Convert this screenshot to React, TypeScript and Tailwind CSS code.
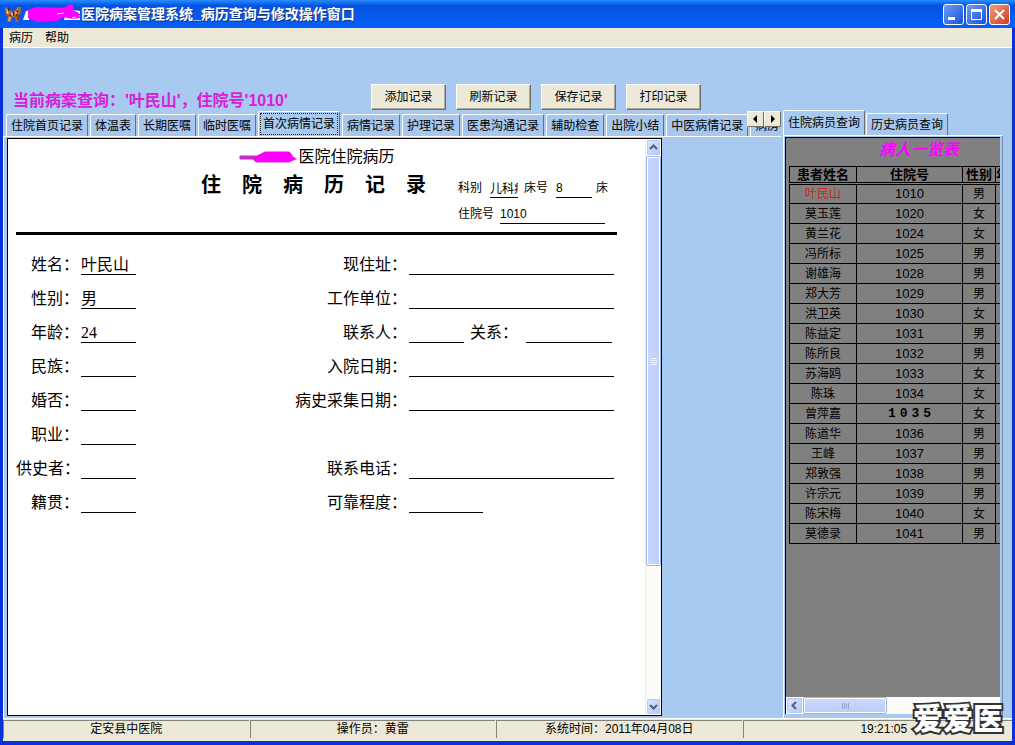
import React, { useState } from 'react';

interface Patient {
  name: string;
  id: string;
  gender: string;
}

const recordTabs = [
  '住院首页记录',
  '体温表',
  '长期医嘱',
  '临时医嘱',
  '首次病情记录',
  '病情记录',
  '护理记录',
  '医患沟通记录',
  '辅助检查',
  '出院小结',
  '中医病情记录',
  '病房',
];

const patientTabs = ['住院病员查询', '历史病员查询'];

const actions = ['添加记录', '刷新记录', '保存记录', '打印记录'];

const patients: Patient[] = [
  { name: '叶民山', id: '1010', gender: '男' },
  { name: '莫玉莲', id: '1020', gender: '女' },
  { name: '黄兰花', id: '1024', gender: '女' },
  { name: '冯所标', id: '1025', gender: '男' },
  { name: '谢雄海', id: '1028', gender: '男' },
  { name: '郑大芳', id: '1029', gender: '男' },
  { name: '洪卫英', id: '1030', gender: '女' },
  { name: '陈益定', id: '1031', gender: '男' },
  { name: '陈所良', id: '1032', gender: '男' },
  { name: '苏海鸥', id: '1033', gender: '女' },
  { name: '陈珠', id: '1034', gender: '女' },
  { name: '曾萍嘉', id: '1035', gender: '女' },
  { name: '陈道华', id: '1036', gender: '男' },
  { name: '王峰', id: '1037', gender: '男' },
  { name: '郑敦强', id: '1038', gender: '男' },
  { name: '许宗元', id: '1039', gender: '男' },
  { name: '陈宋梅', id: '1040', gender: '女' },
  { name: '莫德录', id: '1041', gender: '男' },
];

const TigerIcon = () => (
  <svg width="16" height="16" viewBox="0 0 16 16" aria-hidden="true">
    <path d="M0 1l3 1 1 2 4 1 3-1 1-3 4 0v5l-2 3v5l-1 2h-3l1-4-4-1-1 5H2l1-5-3-4z" fill="#a8653c" />
    <path d="M1 3l2 1 1 3-2 1zM6 6l2 1v3L6 9zM10 5l2 1-1 4-1-2zM4 11h2l-1 4H3z" fill="#e9a878" />
    <path d="M3 2l1 3M8 5l1 5M13 3l-1 3M13 9v5M4 9l2 1M11 8l1 2" stroke="#3b1c14" fill="none" />
    <path d="M12 3h1v1h-1zM2 6h1v1H2z" fill="#fff" />
  </svg>
);

const Chevron = ({ d }: { d: string }) => (
  <svg width="9" height="9" viewBox="0 0 9 9" aria-hidden="true">
    <path d={d} fill="none" stroke="#4d6185" strokeWidth="2" />
  </svg>
);

const scrollButton =
  'flex shrink-0 items-center justify-center rounded-xs border border-white bg-gradient-to-br from-[#dbe6fe] to-[#b4c8f6] shadow-[inset_0_0_0_1px_#b8cbf6]';
const windowButton =
  'flex size-[21px] items-center justify-center rounded-[3px] border border-white';

interface TabProps {
  label: string;
  active: boolean;
  onClick: () => void;
  focusRing?: boolean;
}

const Tab: React.FC<TabProps> = ({ label, active, onClick, focusRing }) => (
  <button
    role="tab"
    aria-selected={active}
    onClick={onClick}
    className={`shrink-0 whitespace-nowrap rounded-t-xs border-t border-r border-l border-t-white border-l-white border-r-[#6b7078] text-xs ${
      active ? 'h-[25px] bg-[#a8caf0] p-px' : 'h-[22px] bg-[#a9c6ec] px-1'
    }`}
  >
    {active ? (
      <span
        className={`flex h-full items-center border border-dotted px-[2px] ${
          focusRing ? 'border-[#222]' : 'border-transparent'
        }`}
      >
        {label}
      </span>
    ) : (
      label
    )}
  </button>
);

interface FieldProps {
  id: string;
  label: string;
  value?: string;
  width: string;
}

// One label / underlined input pair of the record sheet
const Field: React.FC<FieldProps> = ({ id, label, value = '', width }) => (
  <>
    <label htmlFor={id} className="text-right whitespace-nowrap">
      {label}
    </label>
    <input
      id={id}
      defaultValue={value}
      className={`h-5 border-b border-black bg-transparent outline-none ${width}`}
    />
  </>
);

const RecordSheet = () => (
  <form className="ml-2 w-full max-w-[601px] text-black">
    <div className="mt-[6px] flex h-6 items-center justify-center font-['Liberation_Serif','Noto_Sans_CJK_SC',serif] text-base">
      <svg width="60" height="14" viewBox="0 0 60 14" aria-hidden="true">
        <path d="M2 6h17l8-4h24l3 3v5l-3 2H18l-3-3H2z" fill="#c02fc4" stroke="#c02fc4" strokeLinejoin="round" />
        <path d="M15 8l13-6h24l2 4 5 3-5 2-3 1H18z" fill="#ff00ff" />
      </svg>
      <span>医院住院病历</span>
    </div>

    <div className="grid grid-cols-[1fr_auto_1fr]">
      <span />
      <h1 className="flex h-8 items-center gap-[21px] pr-[6px] text-xl font-bold">
        {Array.from('住院病历记录').map((char, index) => (
          <span key={index}>{char}</span>
        ))}
      </h1>
      <div className="mt-[9px] flex flex-col gap-[6px] pl-[26px] text-xs">
        <div className="flex h-5 items-center">
          <label htmlFor="department" className="shrink-0">科别</label>
          <input id="department" defaultValue="儿科病" className="ml-2 h-5 w-7 border-b border-black outline-none" />
          <label htmlFor="bed" className="ml-[6px] shrink-0">床号</label>
          <input id="bed" defaultValue="8" className="ml-2 h-5 w-9 border-b border-black outline-none" />
          <span className="ml-1">床</span>
        </div>
        <div className="flex h-5 items-center">
          <label htmlFor="admission" className="shrink-0">住院号</label>
          <input id="admission" defaultValue="1010" className="ml-[6px] h-5 w-[105px] border-b border-black outline-none" />
        </div>
      </div>
    </div>

    <hr className="mt-2 border-t-[3px] border-black" />

    <div className="mt-[13px] grid auto-rows-[34px] grid-cols-[63px_55px_1fr_205px] items-center gap-x-[2px] pr-[3px] font-['Liberation_Serif','Noto_Sans_CJK_SC',serif] text-base">
      <Field id="name" label="姓名：" value="叶民山" width="w-full" />
      <Field id="address" label="现住址：" width="w-full" />
      <Field id="gender" label="性别：" value="男" width="w-full" />
      <Field id="company" label="工作单位：" width="w-full" />
      <Field id="age" label="年龄：" value="24" width="w-full" />
      <label htmlFor="contact" className="text-right">联系人：</label>
      <div className="flex items-center">
        <input id="contact" className="h-5 w-[55px] border-b border-black outline-none" />
        <label htmlFor="relation" className="ml-[6px] shrink-0">关系：</label>
        <input id="relation" className="ml-2 h-5 w-[86px] border-b border-black outline-none" />
      </div>
      <Field id="nation" label="民族：" width="w-full" />
      <Field id="admitted" label="入院日期：" width="w-full" />
      <Field id="marriage" label="婚否：" width="w-full" />
      <Field id="collected" label="病史采集日期：" width="w-full" />
      <Field id="job" label="职业：" width="w-full" />
      <span className="col-span-2" />
      <Field id="narrator" label="供史者：" width="w-full" />
      <Field id="phone" label="联系电话：" width="w-full" />
      <Field id="origin" label="籍贯：" width="w-full" />
      <Field id="reliability" label="可靠程度：" width="w-[74px]" />
    </div>
  </form>
);

const PatientTable = () => (
  <table className="w-[260px] table-fixed border-collapse text-center text-xs text-black">
    <caption className="h-7 text-base leading-6 font-bold text-[#ff00ff] italic">病人一览表</caption>
    <colgroup>
      <col className="w-[67px]" />
      <col className="w-[106px]" />
      <col className="w-[33px]" />
      <col />
    </colgroup>
    <thead>
      <tr className="border border-b-[3px] border-black [border-bottom-style:double]">
        <th className="border-x border-black p-0 text-[13px] leading-[15px]">患者姓名</th>
        <th className="border-x border-black p-0 text-[13px] leading-[15px]">住院号</th>
        <th className="border-x border-black p-0 text-[13px] leading-[15px]">性别</th>
        <th className="border-x border-black p-0 text-left text-[13px] leading-[15px]">年龄</th>
      </tr>
    </thead>
    <tbody>
      {patients.map((patient, index) => (
        <tr key={patient.id} className="h-5">
          <td className={`border border-black p-0 leading-4 ${index === 0 ? 'text-[#e01818]' : ''}`}>
            {patient.name}
          </td>
          <td className="border border-black p-0 text-[13px] leading-4">
            {patient.id === '1035' ? (
              <span className="flex justify-center gap-1 font-['Liberation_Mono',monospace] font-bold">
                {Array.from(patient.id).map((digit, i) => (
                  <span key={i}>{digit}</span>
                ))}
              </span>
            ) : (
              patient.id
            )}
          </td>
          <td className="border border-black p-0 leading-4">{patient.gender}</td>
          <td className="border border-black p-0" />
        </tr>
      ))}
    </tbody>
  </table>
);

const App: React.FC = () => {
  const [recordTab, setRecordTab] = useState<string>('首次病情记录');
  const [patientTab, setPatientTab] = useState<string>('住院病员查询');

  return (
    <div className="relative flex min-h-screen flex-col bg-[#0831d9] px-[3px] pb-1 font-['Liberation_Sans','Noto_Sans_CJK_SC',sans-serif] text-xs text-black">
      {/* Title bar */}
      <header className="-mx-[3px] flex h-7 items-center bg-gradient-to-b from-[#2a8cff] via-[#0553e0] via-20% to-[#0560fa] pr-[5px] pl-[5px]">
        <TigerIcon />
        <svg className="ml-[2px]" width="58" height="20" viewBox="0 0 58 20" aria-hidden="true">
          <path d="M0 16l3-9 5-1-2 10zM42 12l15-1v5H41zM50 6l7 1v3h-7z" fill="#fff" />
          <path d="M5 6l8-3 27 1 8-4 3 2-1 4 6 3 1 5-7 1-10-2-6 4-20 1-9-4z" fill="#ff00ff" />
          <path d="M34 10l7-1M49 14l4-1" stroke="#fff" />
        </svg>
        <span className="flex-1 truncate text-sm font-bold text-white [text-shadow:1px_1px_0_#10307c]">
          医院病案管理系统_病历查询与修改操作窗口
        </span>
        <div className="flex gap-[2px]">
          <button aria-label="最小化" className={`${windowButton} bg-gradient-to-br from-[#6f9cf5] to-[#1c4fd6]`}>
            <svg width="13" height="13" viewBox="0 0 13 13">
              <path d="M1 9h7v3H1z" fill="#fff" />
            </svg>
          </button>
          <button aria-label="最大化" className={`${windowButton} bg-gradient-to-br from-[#6f9cf5] to-[#1c4fd6]`}>
            <svg width="13" height="13" viewBox="0 0 13 13">
              <path d="M1.5 2.5h10v9h-10z" fill="none" stroke="#fff" />
              <path d="M1 1h11v3H1z" fill="#fff" />
            </svg>
          </button>
          <button aria-label="关闭" className={`${windowButton} bg-gradient-to-br from-[#ef9a80] to-[#cc3a18]`}>
            <svg width="13" height="13" viewBox="0 0 13 13">
              <path d="M2 2l9 9M11 2l-9 9" stroke="#fff" strokeWidth="2" />
            </svg>
          </button>
        </div>
      </header>

      {/* Menu bar */}
      <nav className="flex h-5 items-center gap-3 border-b border-white bg-[#ece9d8] pl-[6px]">
        <button>病历</button>
        <button>帮助</button>
      </nav>

      <main className="flex flex-1 bg-[#a8caf0]">
        {/* Records */}
        <section className="flex min-w-0 flex-1 flex-col">
          <div className="flex h-[63px] items-end">
            <h2 className="w-[368px] shrink-0 pl-[10px] text-base leading-5 font-bold text-[#d820d8]">
              当前病案查询：'叶民山'，住院号'1010'
            </h2>
            <div className="mb-px flex gap-[10px]">
              {actions.map((action) => (
                <button
                  key={action}
                  className="h-[26px] w-[75px] border border-t-white border-r-[#716f64] border-b-[#716f64] border-l-white bg-[#ece9d8] shadow-[inset_-1px_-1px_0_#aca899]"
                >
                  {action}
                </button>
              ))}
            </div>
          </div>

          <div className="relative">
            <div role="tablist" className="flex h-[25px] items-end gap-[2px] overflow-hidden pl-[3px]">
              {recordTabs.map((tab) => (
                <Tab
                  key={tab}
                  label={tab}
                  active={recordTab === tab}
                  onClick={() => setRecordTab(tab)}
                  focusRing
                />
              ))}
            </div>
            <div className="absolute top-0 right-0 flex">
              <button
                aria-label="向左滚动"
                className="flex h-4 w-[17px] items-center justify-center border border-t-white border-r-[#716f64] border-b-[#716f64] border-l-white bg-[#ece9d8]"
              >
                <svg width="5" height="8" viewBox="0 0 5 8"><path d="M4 0v8L0 4z" /></svg>
              </button>
              <button
                aria-label="向右滚动"
                className="flex h-4 w-[17px] items-center justify-center border border-t-white border-r-[#716f64] border-b-[#716f64] border-l-white bg-[#ece9d8]"
              >
                <svg width="5" height="8" viewBox="0 0 5 8"><path d="M1 0v8l4-4z" /></svg>
              </button>
            </div>
          </div>

          <div className="flex flex-1 border-t border-l border-white pt-px pb-[2px] pl-[3px]">
            <div className="mr-[119px] flex flex-1 border border-black bg-white">
              <div className="min-w-0 flex-1">
                <RecordSheet />
              </div>
              <div className="flex w-4 flex-col border-l border-[#eeede5] bg-[#fbfbf8]">
                <button aria-label="向上" className={`h-[17px] ${scrollButton}`}>
                  <Chevron d="M1 6l3.5-3.5L8 6" />
                </button>
                <div className="flex flex-[408] flex-col items-center justify-center gap-px rounded-xs border border-[#9db4ea] bg-gradient-to-r from-[#cad8fc] to-[#bccdf8] shadow-[inset_0_0_0_1px_#fff]">
                  {[0, 1, 2, 3].map((line) => (
                    <span key={line} className="h-px w-[6px] bg-[#eef4fe]" />
                  ))}
                </div>
                <div className="flex-[132]" />
                <button aria-label="向下" className={`h-[17px] ${scrollButton}`}>
                  <Chevron d="M1 3l3.5 3.5L8 3" />
                </button>
              </div>
            </div>
          </div>
        </section>

        {/* Patient list */}
        <aside className="flex w-[231px] shrink-0 flex-col pt-[63px] pr-[9px] pl-[2px]">
          <div role="tablist" className="flex h-6 items-end gap-px">
            {patientTabs.map((tab) => (
              <Tab key={tab} label={tab} active={patientTab === tab} onClick={() => setPatientTab(tab)} />
            ))}
          </div>
          <div className="flex flex-1 flex-col border-t border-r border-l border-t-white border-r-[#6f8fa8] border-l-white pt-px pr-[2px] pb-1 pl-px">
            <div className="flex-1 overflow-hidden border-t border-l border-black bg-[#808080] pl-[3px]">
              <PatientTable />
            </div>
            <div className="flex h-[17px] border-l border-black bg-[#fbfbf8]">
              <button aria-label="向左" className={`w-[17px] ${scrollButton}`}>
                <Chevron d="M6 1L2.500 4.500L6 8" />
              </button>
              <div className="flex w-[84px] items-center justify-center gap-px rounded-xs border border-[#9db4ea] bg-gradient-to-b from-[#cad8fc] to-[#bccdf8] shadow-[inset_0_0_0_1px_#fff]">
                {[0, 1, 2, 3].map((line) => (
                  <span key={line} className="h-[6px] w-px bg-[#8fa8dc]" />
                ))}
              </div>
            </div>
          </div>
        </aside>
      </main>

      {/* Status bar */}
      <footer className="grid h-[23px] grid-cols-[246fr_246fr_246fr_270fr] gap-px border-t border-white bg-[#ece9d8] pt-px pb-[3px] text-center leading-4">
        <span className="border-t border-l border-[#85827a]">定安县中医院</span>
        <span className="border-t border-l border-[#85827a]">操作员：黄雷</span>
        <span className="border-t border-l border-[#85827a]">系统时间：2011年04月08日</span>
        <span className="border-t border-l border-[#85827a] pl-3">19:21:05</span>
      </footer>

      {/* Site mark over the bottom right corner */}
      <div className="pointer-events-none absolute right-3 bottom-0 text-3xl leading-[52px] font-black text-white [-webkit-text-stroke:4px_#333] [paint-order:stroke_fill]">
        爱爱医
      </div>
    </div>
  );
};

export default App;
